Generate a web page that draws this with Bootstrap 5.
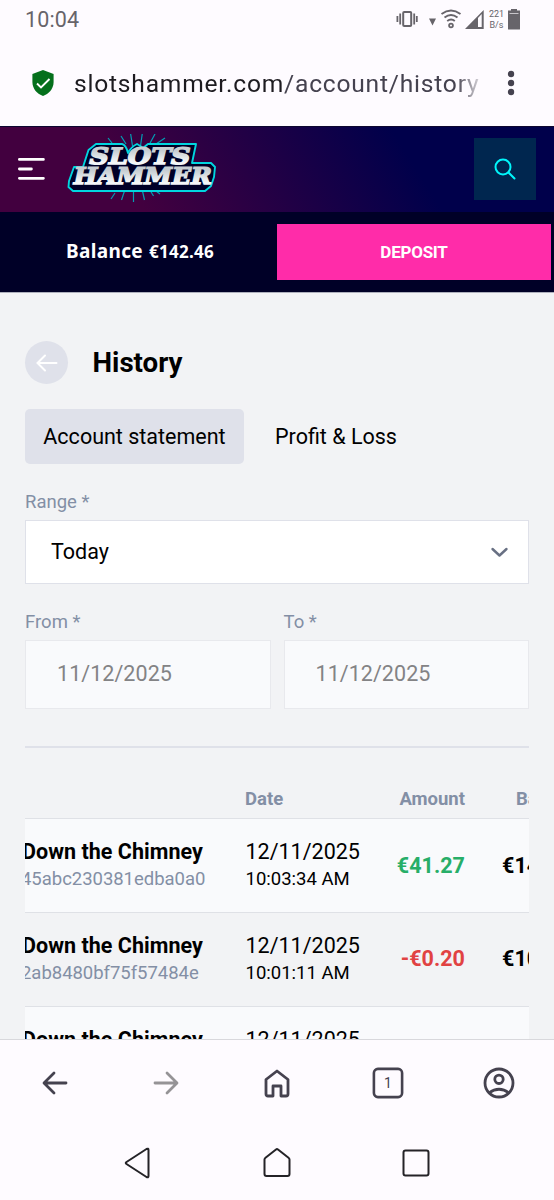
<!DOCTYPE html>
<html lang="en">
<head>
<meta charset="utf-8">
<meta name="viewport" content="width=device-width, initial-scale=1">
<title>SlotsHammer - History</title>
<link href="https://cdn.jsdelivr.net/npm/bootstrap@5.3.0/dist/css/bootstrap.min.css" rel="stylesheet">
<style>
  body { font-family: Roboto, "Noto Sans", sans-serif; background: #fefbff; color: #000; height: 1200px; line-height: 1; overflow: hidden; }
  svg { display: block; flex: none; }
  .status { height: 40px; padding: 0 33px 0 25px; color: #67646a; font-size: 21.5px; }
  .status .clock { letter-spacing: .15px; }
  .urlbar { height: 86px; padding: 0 39px 0 32px; }
  .url { width: 408px; margin-left: 20px; font-size: 24.6px; letter-spacing: .78px; line-height: 34px; padding-top: 1px; white-space: nowrap; overflow: hidden; color: #45424f; -webkit-mask-image: linear-gradient(90deg, #000 93.5%, transparent 101%); mask-image: linear-gradient(90deg, #000 93.5%, transparent 101%); }
  .url .host { color: #1d1b20; }
  .site-head { height: 86px; background: linear-gradient(58deg, #42003f 24%, #00004b 73%); box-shadow: inset 0 1px #0c0630; padding: 0 18px; }
  .search-btn { width: 62px; height: 62px; background: #00264f; border-radius: 0; }
  .funds { height: 81px; background: #000027; color: #fff; padding: 0 3px 0 0; border-bottom: 1px solid #aeb0bc; }
  .balance { width: 277px; font-family: "Noto Sans", sans-serif; font-weight: 700; padding: 0 0 2px 3px; }
  .balance .lbl { font-size: 19px; letter-spacing: .35px; }
  .balance .sum { font-size: 17px; letter-spacing: .25px; margin-left: 6px; }
  .deposit { width: 274px; height: 56px; background: #ff2ca9; color: #fff; font-size: 17px; letter-spacing: -.25px; font-weight: 700; padding: 1px 0 0; }
  .account { height: 746px; background: #f2f3f5; padding: 48px 25px 0; overflow: hidden; }
  .back { width: 43px; height: 43px; background: #dfe1ea; }
  .title { font-size: 27.7px; font-weight: 700; margin-left: 24.500px; }
  .tabs { margin-top: 25px; font-size: 21.5px; }
  .tab-on { width: 219px; height: 55px; background: #dfe1ea; border-radius: 5px; }
  .flabel { font-size: 18.5px; line-height: 22px; color: #838fa5; }
  .range { height: 64px; background: #fff; border: 1.5px solid #dfe1e9; padding: 0 19px 0 25px; font-size: 21.5px; }
  .datebox { height: 69px; background: #f9fafc; border: 1.5px solid #e8e9ed; color: #838385; padding: 0 31px 2px; font-size: 21.5px; letter-spacing: .05px; }
  .rule { height: 2px; background: #dfe1e9; margin-top: 37px; }
  .history { margin-top: 35px; overflow: hidden; }
  .hrow { display: grid; grid-template-columns: 220px 130px 90px 120px; height: 93.800px; width: 560px; align-items: center; border-bottom: 1px solid #dfe1e6; }
  .hrow.odd { background: #f9fafc; }
  .hhead { height: 36px; font-size: 18.5px; font-weight: 700; color: #838fa5; align-items: start; padding-top: 7px; }
  .game { font-size: 21.5px; line-height: 29px; font-weight: 700; margin-left: -3px; white-space: nowrap; letter-spacing: .03px; }
  .ref { font-size: 18.5px; line-height: 27px; color: #838fa5; margin-left: -4px; letter-spacing: -.03px; }
  .day { font-size: 21.5px; line-height: 29px; padding-left: .5px; }
  .hour { font-size: 18.5px; line-height: 27px; padding-left: .5px; }
  .sumcell { font-size: 21.5px; font-weight: 700; text-align: right; letter-spacing: .05px; }
  .gain { color: #27ae68; } .loss { color: #e14242; }
  .tools { height: 87px; border-top: 1px solid #d8d8dc; padding-bottom: 1px; }
  .tools > div, .sysnav > div { flex: 1; display: flex; justify-content: center; }
  .sysnav { height: 74px; padding: 0 69px 0 68px; }
</style>
</head>
<body>
<div class="status d-flex align-items-center justify-content-between">
  <span class="clock">10:04</span>
  <div class="d-flex align-items-center">
    <svg width="126" height="26" viewBox="395 6.500 126 26">
      <g fill="none" stroke="#67646a">
        <rect x="403.200" y="11.500" width="8" height="14" rx="1" stroke-width="2"/>
        <path d="M400.200 13v11M397.400 15.500v6M414.200 13v11M416.800 15.500v6" stroke-width="1.8"/>
        <path d="M441.500 13.500q9.500-7 19 0M444.500 17q6.500-5 13 0M447.200 20.600q4-3 7.600 0" stroke-width="1.9"/>
        <circle cx="451" cy="25" r="1.900" stroke-width="1.8"/>
      </g>
      <path d="M429 18h7l-3.500 7z" fill="#67646a"/>
      <path fill-rule="evenodd" d="M465 28.500 483.700 9.500v19zM478 17.500v9h3.700v-13z" fill="#67646a"/>
      <path d="M511 8.500h6v1.500h3v18.500q0 .5-.5.5h-11q-.5 0-.5-.5v-18.500h3z" fill="#67646a"/>
      <path d="M509.500 13h9" stroke="#c8c5ca"/>
      <text x="489" y="16" font-size="9" textLength="15" fill="#67646a">221</text>
      <text x="489.500" y="27" font-size="9" textLength="14" fill="#67646a">B/s</text>
    </svg>
  </div>
</div>
<div class="urlbar d-flex align-items-center">
  <svg width="22" height="26" viewBox="0 0 22 26"><path d="M11 0 21.600 4v8c0 7-5 12-10.600 14C5.400 24 .4 19 .4 12V4z" fill="#05701c"/><path d="m5 13.500 4 4 8.500-8.500" fill="none" stroke="#fff" stroke-width="1.900"/></svg>
  <div class="url"><span class="host">slotshammer.com</span>/account/history</div>
  <svg class="ms-auto" width="8" height="26" viewBox="0 0 8 26" fill="#45424f"><circle cx="4" cy="4" r="3.200"/><circle cx="4" cy="13" r="3.200"/><circle cx="4" cy="22" r="3.200"/></svg>
</div>
<header class="site-head d-flex align-items-center">
  <svg width="27" height="24" viewBox="0 0 27 24" stroke="#fff" stroke-width="2.800" stroke-linecap="round"><path d="M1.400 2.400h24M1.400 12h12M1.400 21.300h24"/></svg>
  <svg style="margin-left:21px" width="152" height="70" viewBox="66 134 152 70">
    <g stroke="#009fb5" stroke-width="1.200" fill="none"><path d="m121 136 5 8M130.500 133l2 13M142.500 132l-2 14M155 134l-6 11M165 138l-9 6M108 138l4 5M111 199l4-6M121.500 200l3-9M133.500 202v-11M144.500 200l-2-9M153.500 196l-3-5M160 194l-4-3"/></g>
    <path d="M96 144h26q4 1 6 9 3-6 9-9 5 3 6 4l5-4h48l-4 19h19l4 4-1 10-3 9-6 5H73l-4.500-4 .500-6 5-14h9l5.500-17z" fill="#000027" stroke="#00d5df" stroke-width="1.900" stroke-linejoin="round"/>
    <linearGradient id="steel" x1="0" y1="0" x2="0" y2="1"><stop offset=".3" stop-color="#c6cdd2"/><stop offset=".75" stop-color="#f4f7f8"/></linearGradient>
    <g font-family="DejaVu Serif" font-weight="700" fill="url(#steel)" stroke="url(#steel)" stroke-width="1.500">
      <text transform="translate(87.500 163.500) skewX(-14)" font-size="22.500" textLength="101" lengthAdjust="spacingAndGlyphs">SLOTS</text>
      <text transform="translate(72 184) skewX(-12)" font-size="23" textLength="138" lengthAdjust="spacingAndGlyphs">HAMMER</text>
    </g>
  </svg>
  <button class="btn search-btn p-0 ms-auto d-flex align-items-center justify-content-center" aria-label="Search">
    <svg width="22" height="22" viewBox="0 0 22 22" fill="none" stroke="#00f5fa" stroke-width="2" stroke-linecap="round"><circle cx="9" cy="9" r="7.500"/><path d="m14.500 14.500 6 6"/></svg>
  </button>
</header>
<div class="funds d-flex align-items-center">
  <div class="balance d-flex align-items-baseline justify-content-center"><span class="lbl">Balance</span><span class="sum">€142.46</span></div>
  <button class="btn deposit rounded-0 border-0">DEPOSIT</button>
</div>
<main class="account">
  <div class="d-flex align-items-center">
    <div class="back rounded-circle d-flex align-items-center justify-content-center"><svg width="22" height="18" viewBox="0 0 22 18" fill="none" stroke="#fff" stroke-width="2" stroke-linecap="round"><path d="M20.500 9H1.500M9 1.500 1.500 9 9 16.500"/></svg></div>
    <h1 class="title mb-0">History</h1>
  </div>
  <div class="tabs d-flex align-items-center">
    <div class="tab-on d-flex align-items-center justify-content-center">Account statement</div>
    <div style="margin-left:31px">Profit &amp; Loss</div>
  </div>
  <div class="flabel" style="margin-top:27px">Range *</div>
  <div class="range d-flex align-items-center justify-content-between" style="margin-top:7px">Today
    <svg width="20" height="14" viewBox="0 0 20 14" fill="none" stroke="#687083" stroke-width="2.400" stroke-linecap="round" stroke-linejoin="round"><path d="m3.500 4 7 6.500 7-6.500"/></svg>
  </div>
  <div class="d-flex" style="gap:13px;margin-top:27px">
    <div class="flex-fill"><div class="flabel">From *</div><div class="datebox d-flex align-items-center" style="margin-top:7px">11/12/2025</div></div>
    <div class="flex-fill"><div class="flabel">To *</div><div class="datebox d-flex align-items-center" style="margin-top:7px">11/12/2025</div></div>
  </div>
  <div class="rule"></div>
  <div class="history">
    <div class="hrow hhead"><span></span><span>Date</span><span class="text-end">Amount</span><span style="padding-left:51px">Balance</span></div>
    <div class="hrow odd"><div><div class="game">Down the Chimney</div><div class="ref">45abc230381edba0a0</div></div><div><div class="day">12/11/2025</div><div class="hour">10:03:34 AM</div></div><div class="sumcell gain">€41.27</div><div class="sumcell text-start" style="padding-left:37px">€142.46</div></div>
    <div class="hrow"><div><div class="game">Down the Chimney</div><div class="ref">2ab8480bf75f57484e</div></div><div><div class="day">12/11/2025</div><div class="hour">10:01:11 AM</div></div><div class="sumcell loss">-€0.20</div><div class="sumcell text-start" style="padding-left:37px">€101.19</div></div>
    <div class="hrow odd"><div><div class="game">Down the Chimney</div><div class="ref">&nbsp;</div></div><div><div class="day">12/11/2025</div><div class="hour">&nbsp;</div></div></div>
  </div>
</main>
<nav class="tools d-flex align-items-center">
  <div><svg width="26" height="24" viewBox="0 0 26 24" fill="none" stroke="#45424f" stroke-width="2.800" stroke-linecap="round" stroke-linejoin="round"><path d="M24 12H2.500M12 2 2 12l10 10"/></svg></div>
  <div><svg width="26" height="24" viewBox="0 0 26 24" fill="none" stroke="#959396" stroke-width="2.800" stroke-linecap="round" stroke-linejoin="round"><path d="M2 12h21.500M14 2l10 10-10 10"/></svg></div>
  <div><svg width="28" height="30" viewBox="0 0 28 30" fill="none" stroke="#45424f" stroke-width="2.800" stroke-linejoin="round"><path d="M3 11.500 14 3l11 8.500V26q0 2-2 2h-5v-10h-8v10H5q-2 0-2-2z"/></svg></div>
  <div><svg width="32" height="32" viewBox="0 0 32 32"><rect x="1.900" y="1.900" width="28.200" height="28.200" rx="4" fill="none" stroke="#45424f" stroke-width="2.600"/><text x="16" y="21" text-anchor="middle" font-size="14" fill="#45424f">1</text></svg></div>
  <div><svg width="32" height="32" viewBox="0 0 32 32" fill="none" stroke="#45424f" stroke-width="2.800"><circle cx="16" cy="16" r="14"/><circle cx="16" cy="12.300" r="4.200"/><path d="M6 26q10-7.500 20 0"/></svg></div>
</nav>
<nav class="sysnav d-flex align-items-center">
  <div><svg width="28" height="32" viewBox="0 0 28 32" fill="none" stroke="#242327" stroke-width="2" stroke-linejoin="round"><path d="M2.500 15q-1.500 1 0 2L22.500 30q2 1 2-1V3q0-2-2-1z"/></svg></div>
  <div><svg width="28" height="32" viewBox="0 0 28 32" fill="none" stroke="#242327" stroke-width="2" stroke-linejoin="round"><path d="M1.500 12.500q0-1 1-1.800L13 2.500q1-.8 2 0l10.500 8.200q1 .8 1 1.800V27q0 2-2 2h-21q-2 0-2-2z"/></svg></div>
  <div><svg width="28" height="28" viewBox="0 0 28 28" fill="none" stroke="#242327" stroke-width="2"><rect x="1.500" y="1.500" width="25" height="25" rx="2"/></svg></div>
</nav>
<script src="https://cdn.jsdelivr.net/npm/bootstrap@5.3.0/dist/js/bootstrap.bundle.min.js"></script>
</body>
</html>
